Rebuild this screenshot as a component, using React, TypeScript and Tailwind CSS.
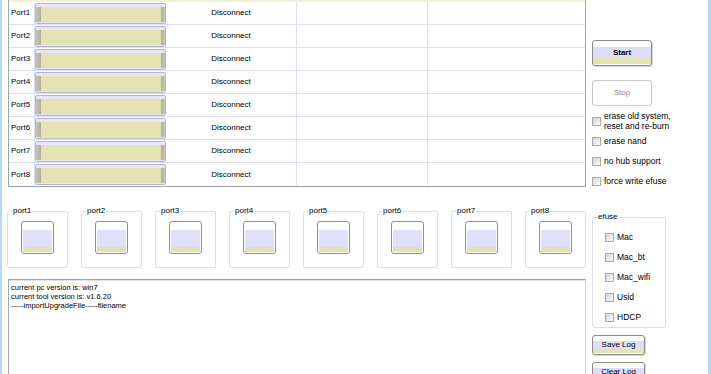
const PORTS = [1, 2, 3, 4, 5, 6, 7, 8];

const OPTIONS = ['erase nand', 'no hub support', 'force write efuse'];
const EFUSE = ['Mac', 'Mac_bt', 'Mac_wifi', 'Usid', 'HDCP'];

function CheckBox() {
  return (
    <span className="block w-[9px] h-[9px] shrink-0 border border-[#a9a9a9] bg-[linear-gradient(135deg,#d4d4d4,#fbfbfb)]" />
  );
}

function ProgressBar() {
  return (
    <div className="flex flex-col h-[21px] w-full border border-[#b4b4cc] rounded-[2px] overflow-hidden bg-[#ececf8]">
      <div className="h-[3px] bg-[#e6e6f8]" />
      <div className="flex flex-1">
        <div className="w-[5px] bg-[linear-gradient(to_right,#c8c7b8,#aeada0)]" />
        <div className="flex-1 bg-[#e6e3b3]" />
        <div className="w-[4px] bg-[linear-gradient(to_left,#c8c7b8,#aeada0)]" />
      </div>
      <div className="h-[1px] bg-[#e4e4f6]" />
    </div>
  );
}

function TriButton({ label, className }: { label: string; className: string }) {
  return (
    <button
      className={`shrink-0 flex items-center justify-center border border-[#8c8c86] rounded-[3px] text-[8px] text-black shadow-[1px_1px_0_#d8d8d8] ${className}`}
    >
      {label}
    </button>
  );
}

export default function App() {
  return (
    <div className="flex w-[711px] h-[374px] overflow-hidden bg-white text-black font-['Liberation_Sans',Arial,sans-serif]">
      <div className="w-[2px] bg-[#b4d8f8]" />

      <div className="flex flex-1 pl-[6px]">
        {/* left column: table, port boxes, log */}
        <div className="flex flex-col w-[578px]">
          <div className="shrink-0 border-x border-b border-[#a2a2ae]">
            <div className="h-[2px] bg-[#f3f1d8]" />
            {PORTS.map(n => (
              <div key={n} className="flex h-[23px] border-b border-[#dedef6] last:border-b-0">
                <div className="w-[26px] border-r border-[#dedef6] flex items-center pl-[2px] text-[8px]">Port{n}</div>
                <div className="w-[131px] flex items-center">
                  <ProgressBar />
                </div>
                <div className="w-[131px] border-r border-[#dedef6] flex items-center justify-center text-[8px]">
                  Disconnect
                </div>
                <div className="w-[131px] border-r border-[#dedef6]" />
                <div className="flex-1" />
              </div>
            ))}
          </div>

          <div className="shrink-0 flex gap-[13px] mt-[19px] -ml-[1px]">
            {PORTS.map(n => (
              <fieldset key={n} className="w-[61px] border border-[#dcdcf2] rounded-[2px] pb-[13px]">
                <legend className="ml-[4px] px-[1px] text-[8px] leading-[10px]">port{n}</legend>
                <div className="mx-auto mt-[5px] w-[33px] h-[33px] border border-[#8e8e8a] rounded-[3px] p-[1px] flex flex-col">
                  <div className="h-[7px]" />
                  <div className="h-[17px] bg-[#e0e0fa]" />
                  <div className="h-[5px] bg-[#e4e1ae]" />
                </div>
              </fieldset>
            ))}
          </div>

          <div className="shrink-0 mt-[11px] h-[100px] border-t border-l border-r border-t-[#a0a0a0] border-l-[#a8a8a8] border-r-[#d4d4d4] shadow-[inset_0_1px_0_#e2e2e2] pt-[3px] pl-[2px] text-[7.5px] leading-[9px]">
            <div>current pc version is: win7</div>
            <div>current tool version is: v1.6.20</div>
            <div>-----importUpgradeFile-----filename</div>
          </div>
        </div>

        {/* right column: actions and options */}
        <div className="flex flex-col ml-[6px] w-[112px]">
          <TriButton
            label="Start"
            className="mt-[40px] w-[60px] h-[26px] font-semibold bg-[linear-gradient(to_bottom,#fff_0_6px,#dedef8_6px_17px,#e6e3b2_17px_23px,#fff_23px)]"
          />
          <button className="shrink-0 mt-[14px] w-[60px] h-[26px] border border-[#c8c8c8] rounded-[3px] text-[8px] text-[#8a8a8a] bg-white">
            Stop
          </button>

          <div className="shrink-0 flex items-center gap-[3px] mt-[5px] h-[20px]">
            <CheckBox />
            <span className="text-[8.5px] leading-[10px] whitespace-nowrap">
              erase old system,
              <br />
              reset and re-burn
            </span>
          </div>
          {OPTIONS.map(o => (
            <div key={o} className="shrink-0 flex items-center gap-[3px] h-[20px]">
              <CheckBox />
              <span className="text-[8.5px] whitespace-nowrap">{o}</span>
            </div>
          ))}

          <fieldset className="shrink-0 mt-[21px] w-[74px] border border-[#dcdcf2] rounded-[2px] pt-[5px]">
            <legend className="ml-[4px] px-[1px] text-[8px] leading-[10px]">efuse</legend>
            <div className="pl-[12px]">
              {EFUSE.map(e => (
                <div key={e} className="flex items-center gap-[3px] h-[20px]">
                  <CheckBox />
                  <span className="text-[8.5px]">{e}</span>
                </div>
              ))}
            </div>
          </fieldset>

          <TriButton
            label="Save Log"
            className="mt-[7px] w-[53px] h-[20px] bg-[linear-gradient(to_bottom,#fff_0_5px,#dedef8_5px_13px,#e6e3b2_13px_17px,#fff_17px)]"
          />
          <TriButton
            label="Clear Log"
            className="mt-[7px] w-[53px] h-[20px] bg-[linear-gradient(to_bottom,#fff_0_5px,#dedef8_5px_13px,#e6e3b2_13px_17px,#fff_17px)]"
          />
        </div>
      </div>

      <div className="w-[3px] bg-[#b4d8f8]" />
    </div>
  );
}
